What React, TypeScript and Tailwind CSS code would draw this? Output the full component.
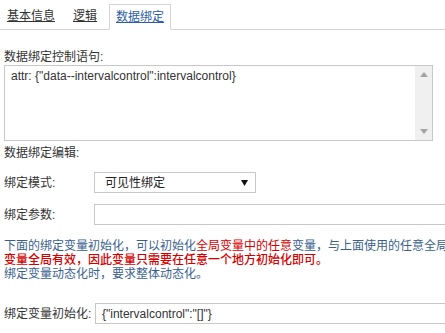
import React from "react";

export default function App() {
  const font = "font-['Liberation_Sans','Noto_Sans_CJK_SC',sans-serif]";
  return (
    <div className={`w-[445px] h-[333px] overflow-hidden bg-white text-[12px] text-[#333] ${font}`}>
      {/* tabs */}
      <div className="flex items-end h-[30px] border-b border-[#d4d4d4]">
        <div className="ml-[1px] px-[6px] h-[26px] flex items-center leading-[16px] underline text-[#333]">基本信息</div>
        <div className="ml-[6px] px-[6px] h-[26px] flex items-center leading-[16px] underline text-[#333]">逻辑</div>
        <div className="ml-[6px] px-[6px] h-[26px] -mb-px flex items-center leading-[16px] underline text-[#2b5ea8] border border-[#d4d4d4] border-b-white bg-white">
          数据绑定
        </div>
      </div>

      <div className="px-[4px]">
        <div className="mt-[19px] leading-[16px]">数据绑定控制语句:</div>
        <div className="flex h-[76px] w-[429px] border border-[#c8c8c8]">
          <div className="flex-1 pl-[6px] pt-[2px] leading-[16px] text-[#333]">
            attr: {'{"data--intervalcontrol":intervalcontrol}'}
          </div>
          <div className="w-[17px] bg-[#f0f0f0] flex flex-col items-center justify-between py-[6px]">
            <svg width="8" height="5" viewBox="0 0 8 5"><path d="M0 5 L4 0 L8 5 Z" fill="#a3a3a3" /></svg>
            <svg width="8" height="5" viewBox="0 0 8 5"><path d="M0 0 L8 0 L4 5 Z" fill="#a3a3a3" /></svg>
          </div>
        </div>

        <div className="mt-[4px] leading-[16px]">数据绑定编辑:</div>

        <div className="mt-[11px] flex items-center h-[21px]">
          <div className="w-[90px] shrink-0 leading-[16px]">绑定模式:</div>
          <div className="w-[162px] shrink-0 h-[21px] border border-[#c8c8c8] flex items-center justify-between pl-[10px] pr-[7px]">
            <span className="leading-[16px] text-[#222]">可见性绑定</span>
            <svg width="7" height="6" viewBox="0 0 7 6"><path d="M0 0 L7 0 L3.5 6 Z" fill="#111" /></svg>
          </div>
        </div>

        <div className="mt-[11px] flex items-center h-[21px]">
          <div className="w-[90px] shrink-0 leading-[16px]">绑定参数:</div>
          <div className="w-[360px] shrink-0 h-[21px] border border-[#c8c8c8]"></div>
        </div>

        <div className="mt-[14px] leading-[14px] text-[#3a5f8f] whitespace-nowrap">
          <div>
            下面的绑定变量初始化，可以初始化<span className="text-[#d40000]">全局变量中的任意</span>变量，与上面使用的任意全局
          </div>
          <div className="text-[#d40000] font-medium">变量全局有效，因此变量只需要在任意一个地方初始化即可。</div>
          <div>绑定变量动态化时，要求整体动态化。</div>
        </div>

        <div className="mt-[22px] flex items-center h-[21px]">
          <div className="w-[91px] shrink-0 whitespace-nowrap leading-[16px]">绑定变量初始化:</div>
          <div className="w-[360px] shrink-0 h-[21px] border border-[#c8c8c8] flex items-center pl-[6px] leading-[16px] text-[#333]">
            {'{"intervalcontrol":"[]"}'}
          </div>
        </div>
      </div>
    </div>
  );
}
